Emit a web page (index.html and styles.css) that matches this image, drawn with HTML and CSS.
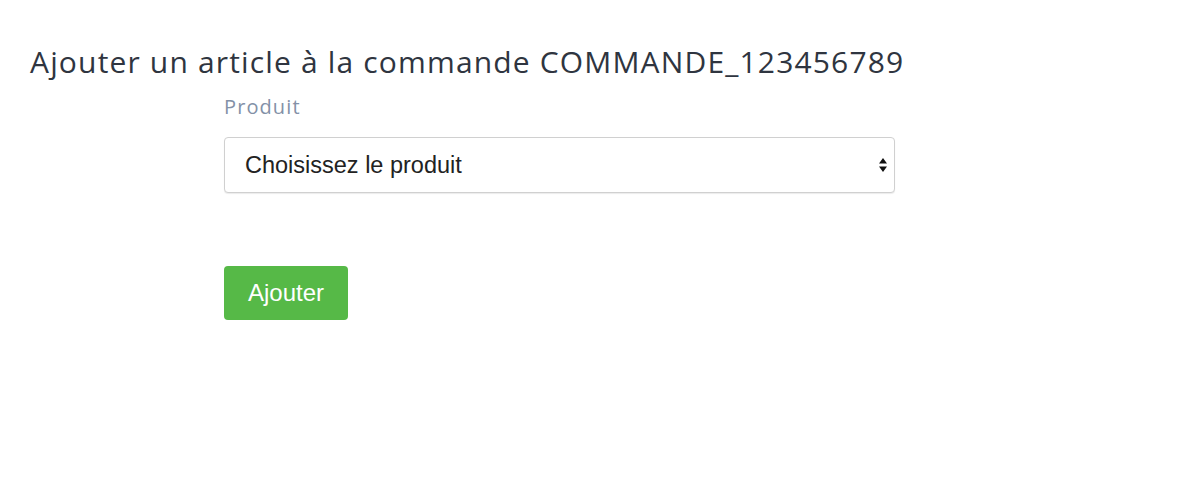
FILE: index.html
```html
<!DOCTYPE html>
<html lang="fr">
<head>
<meta charset="utf-8">
<title>Ajouter un article</title>
<link rel="stylesheet" href="styles.css">
</head>
<body>
<h1 class="title">Ajouter un article à la commande COMMANDE_123456789</h1>
<form class="form">
  <label class="label" for="produit">Produit</label>
  <div class="select-wrap">
    <select id="produit" class="select">
      <option>Choisissez le produit</option>
    </select>
    <svg class="arrows" width="8" height="14" viewBox="0 0 8 14"><path d="M4 0 L8 5.5 H0 Z M0 8.5 H8 L4 14 Z" fill="#111"/></svg>
  </div>
  <button type="button" class="btn">Ajouter</button>
</form>
</body>
</html>
```
FILE: styles.css
```css
html, body {
  margin: 0;
  padding: 0;
  background: #fff;
}
body {
  width: 1180px;
  height: 504px;
  overflow: hidden;
}
.title {
  margin: 0;
  padding: 44px 0 0 30px;
  font-family: "Open Sans", "Noto Sans", sans-serif;
  font-weight: 400;
  font-size: 30px;
  line-height: 36px;
  color: #2f3540;
  letter-spacing: 1.16px;
}
.form {
  margin: 14px 0 0 224px;
  width: 671px;
  display: flex;
  flex-direction: column;
  align-items: flex-start;
}
.label {
  font-family: "Open Sans", "Noto Sans", sans-serif;
  font-size: 20px;
  line-height: 26px;
  letter-spacing: 1.1px;
  color: #8391a7;
  margin-bottom: 17px;
}
.select-wrap {
  position: relative;
  width: 671px;
}
.select {
  appearance: none;
  -webkit-appearance: none;
  width: 100%;
  height: 56px;
  box-sizing: border-box;
  border: 1px solid #d0d0d0;
  border-radius: 4px;
  background: #fff;
  box-shadow: 0 1px 1px rgba(0,0,0,0.08);
  padding: 0 20px;
  font-family: "Liberation Sans", Arial, sans-serif;
  font-size: 23.5px;
  color: #222;
  outline: none;
}
.arrows {
  position: absolute;
  right: 8px;
  top: 21px;
  pointer-events: none;
}
.btn {
  margin-top: 73px;
  width: 124px;
  height: 54px;
  border: none;
  border-radius: 4px;
  background: #56b947;
  color: #fff;
  font-family: "Liberation Sans", Arial, sans-serif;
  font-size: 24px;
  padding: 0;
  cursor: pointer;
}
```
